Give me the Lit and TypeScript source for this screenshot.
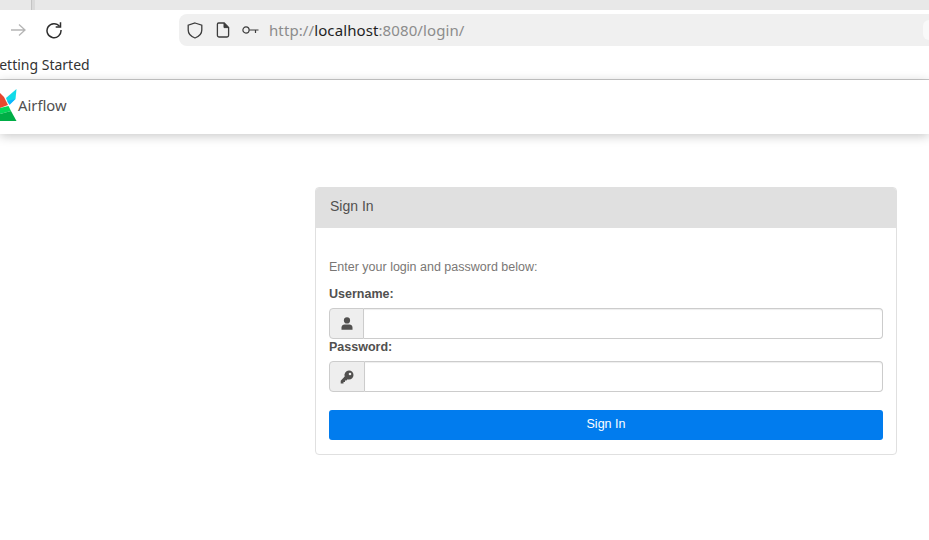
import { LitElement, html, css } from "lit";
import { customElement } from "lit/decorators.js";

@customElement("app-root")
export class AppRoot extends LitElement {
  static styles = css`
    :host { display: block; width: 929px; height: 540px; overflow: hidden; background: #fff; font-family: "Liberation Sans", Arial, sans-serif; }
    * { box-sizing: border-box; }
    .tabs { height: 10px; background: #e8e8e8; padding-left: 31px; }
    .tabsep { width: 4px; height: 10px; background: #dadada; border-left: 1px solid #c4c4c4; }
    .toolbar { height: 40px; display: flex; align-items: center; padding: 0 0 0 9px; font-family: "Noto Sans", "Open Sans", sans-serif; }
    .tb { display: block; flex: none; }
    .reload { margin-left: 18px; }
    .url { margin-left: 116px; flex: 1; height: 32px; background: #f0f0f0; border-radius: 8px 0 0 8px; display: flex; align-items: center; padding-left: 8px; position: relative; }
    .url svg { flex: none; display: block; }
    .page { margin-left: 13px; }
    .key { margin-left: 12px; }
    .addr { margin-left: 10px; font-size: 15px; color: #8c8c8c; letter-spacing: 0.1px; white-space: nowrap; }
    .addr b { font-weight: 400; color: #1f1f1f; }
    .pill { position: absolute; right: 0; top: 6px; width: 6px; height: 20px; background: #f9f9f9; border-radius: 6px 0 0 6px; }
    .marks { height: 30px; border-bottom: 1px solid #cbcbcb; display: flex; align-items: center; overflow: hidden; font-family: "Noto Sans", "Open Sans", sans-serif; font-size: 14px; color: #333; }
    .marks span { margin-left: -11px; white-space: nowrap; }
    .nav { height: 54px; display: flex; align-items: center; padding-bottom: 4px; box-shadow: 0 2px 10px rgba(0,0,0,.22); position: relative; font-family: "Noto Sans", "Open Sans", sans-serif; }
    .nav svg { display: block; flex: none; }
    .nav span { font-size: 14.8px; color: #51504f; }
    .main { padding: 53px 0 0 315px; }
    .panel { width: 582px; height: 268px; border: 1px solid #e0e0e0; border-radius: 4px; overflow: hidden; }
    .head { height: 41px; margin: -1px -1px 0; background: #e0e0e0; display: flex; align-items: center; padding: 0 0 3px 15px; font-size: 14px; color: #51504f; border-radius: 4px 4px 0 0; }
    .body { padding: 0 13px; display: flex; flex-direction: column; }
    .hint { margin: 31px 0 0; height: 16px; font-size: 12.5px; line-height: 16px; color: #7a7775; }
    .lab { display: block; font-size: 12.5px; line-height: 14px; font-weight: 700; color: #51504f; }
    .lab.u { margin-top: 12px; }
    .lab.p { margin-top: 1px; }
    .grp { display: flex; height: 31px; margin-top: 7px; }
    .add { width: 35px; flex: none; border: 1px solid #ccc; background: #eee; border-radius: 4px 0 0 4px; display: flex; align-items: center; justify-content: center; }
    .add.k { width: 36px; }
    .add svg { display: block; }
    input { flex: 1; min-width: 0; height: 31px; border: 1px solid #ccc; border-left: none; border-radius: 0 4px 4px 0; background: #fff; padding: 0 8px; box-shadow: inset 0 1px 1px rgba(0,0,0,.07); outline: none; }
    button { margin-top: 18px; height: 30px; width: 100%; border: none; background: #017cee; color: #fff; border-radius: 3px; font: 12.5px "Liberation Sans", Arial, sans-serif; padding: 0 0 2px; }
  `;

  render() {
    return html`
      <div class="tabs"><div class="tabsep"></div></div>
      <div class="toolbar">
        <svg class="tb" width="18" height="16" viewBox="0 0 18 16" fill="none" stroke="#b5b5b5" stroke-width="1.3"><path d="M2 8h14M10 2.500 16 8l-6 5.500"/></svg>
        <svg class="tb reload" width="18" height="18" viewBox="0 0 18 18" fill="none" stroke="#2e2e2e" stroke-width="1.5"><path d="M14.600 5.400A7 7 0 1 0 16 9"/><path d="M15.500 1.200v4.800h-4.800" /></svg>
        <div class="url">
          <svg width="16" height="17" viewBox="0 0 16 17" fill="none" stroke="#3d3d3d" stroke-width="1.3"><path d="M8 1 14.800 3.200V8c0 4-3 6.600-6.800 8C4.200 14.600 1.200 12 1.200 8V3.200Z"/></svg>
          <svg class="page" width="14" height="16" viewBox="0 0 14 16" fill="none" stroke="#3d3d3d" stroke-width="1.3"><path d="M2.600 1h5.600L12.600 5.400V13.200a1.800 1.800 0 0 1-1.800 1.800H3.200a1.800 1.800 0 0 1-1.800-1.800V2.200A1.200 1.200 0 0 1 2.600 1Z"/><path d="M8 1v4.600h4.600" fill="#3d3d3d" stroke-width="1"/></svg>
          <svg class="key" width="17" height="10" viewBox="0 0 17 10" fill="none" stroke="#3d3d3d" stroke-width="1.2"><circle cx="4" cy="5" r="3.100"/><path d="M7 5h9.500M13.500 5v3"/></svg>
          <span class="addr">http://<b>localhost</b>:8080/login/</span>
          <div class="pill"></div>
        </div>
      </div>
      <div class="marks"><span>Getting Started</span></div>
      <div class="nav">
        <svg width="18" height="34" viewBox="0 0 18 34">
          <path d="M0 5 4 9 8 17 0 20Z" fill="#e8472f"/>
          <path d="M16.500 1 15.500 11 9.500 16 8 15 6 10Z" fill="#11dbe8"/>
          <path d="M15.500 11 9.500 17 7.500 13Z" fill="#0cb6ff"/>
          <path d="M0 20 8.500 18 11 23 0 26Z" fill="#04d659"/>
          <path d="M0 26 11 23 16.500 33H0Z" fill="#00ad46"/>
        </svg>
        <span>Airflow</span>
      </div>
      <div class="main">
        <div class="panel">
          <div class="head">Sign In</div>
          <div class="body">
            <p class="hint">Enter your login and password below:</p>
            <label class="lab u">Username:</label>
            <div class="grp">
              <div class="add">
                <svg width="12" height="13" viewBox="0 0 12 13" fill="#51504f"><circle cx="6" cy="3.400" r="3.100"/><path d="M.5 12.800V10.500C.5 8.500 2 7.400 3.500 7.400h5c1.500 0 3 1.100 3 3.100v2.300Z"/></svg>
              </div>
              <input type="text" />
            </div>
            <label class="lab p">Password:</label>
            <div class="grp">
              <div class="add k">
                <svg width="14" height="14" viewBox="0 0 14 14" fill="#51504f"><path fill-rule="evenodd" d="M9 .5a4.500 4.500 0 0 1 0 9c-.5 0-1-.1-1.400-.2L6.500 10.500H5V12H3.500v1.500H.7V10.800L4.700 6.500A4.500 4.500 0 0 1 9 .5Zm1 2.200a1.300 1.300 0 1 0 0 2.600 1.300 1.300 0 0 0 0-2.600Z"/></svg>
              </div>
              <input type="password" />
            </div>
            <button>Sign In</button>
          </div>
        </div>
      </div>
    `;
  }
}
